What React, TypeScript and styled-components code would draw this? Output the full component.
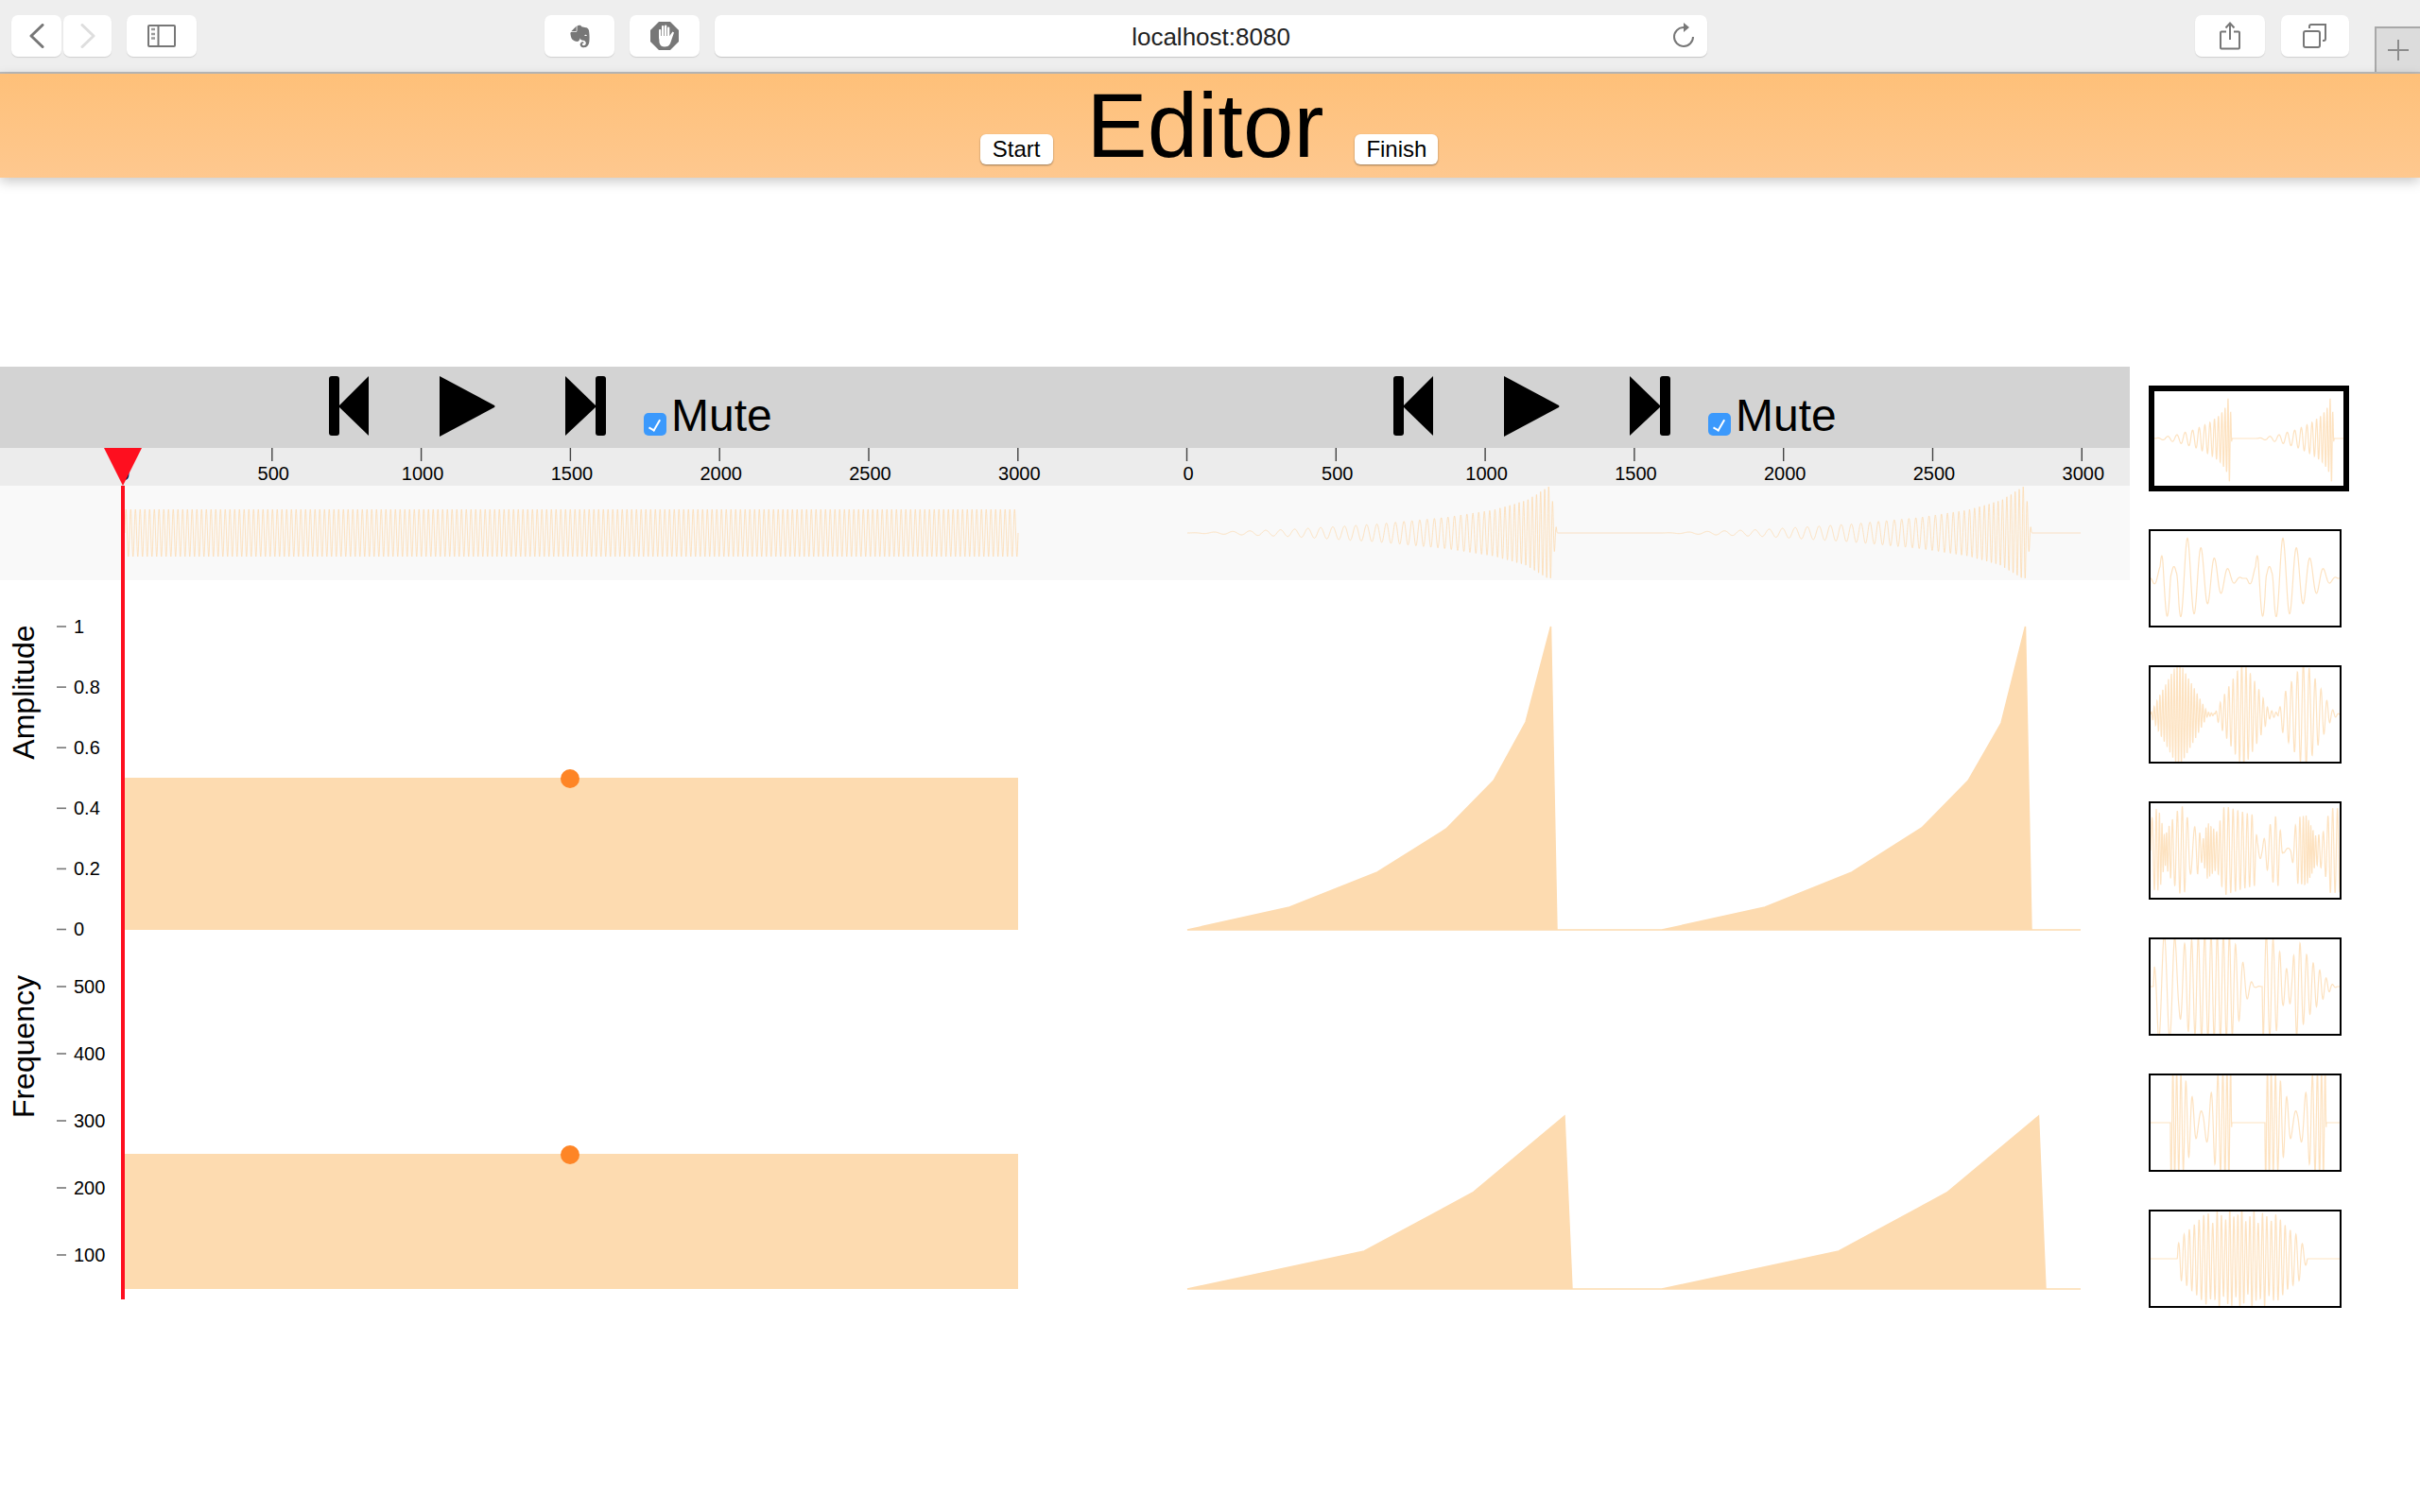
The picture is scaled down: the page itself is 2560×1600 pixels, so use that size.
import React from 'react';
import styled, { createGlobalStyle } from 'styled-components';
import { FaEvernote } from 'react-icons/fa';

const PEACH = '#fddbb0';

type Pts = [number, number][];

const lerp = (pts: Pts, x: number) => {
  if (x <= pts[0][0]) return pts[0][1];
  for (let i = 1; i < pts.length; i++) {
    if (x <= pts[i][0]) {
      const [x0, y0] = pts[i - 1];
      const [x1, y1] = pts[i];
      return y0 + ((y1 - y0) * (x - x0)) / (x1 - x0 || 1);
    }
  }
  return pts[pts.length - 1][1];
};

// walks a sine along x, env and rate points are local to the segment start
const wave = (from: number, to: number, env: Pts, rate: Pts, cy: number, scale: number, phase = 0, step = 0.25) => {
  const out: string[] = [];
  let p = phase;
  for (let x = from; x <= to; x += step) {
    const local = x - from;
    const a = lerp(env, local);
    out.push(`${x.toFixed(2)},${(cy - a * scale * Math.sin(p)).toFixed(2)}`);
    p += 2 * Math.PI * lerp(rate, local) * step;
  }
  return out.join(' ');
};

const mainEnv: Pts = [[0, 0], [108, 0.075], [201, 0.19], [274, 0.333], [324, 0.49], [358, 0.685], [384, 1], [391, 0.03], [392, 0]];
const mainRate: Pts = [[0, 0.041], [187, 0.0875], [302, 0.16], [399, 0.256]];

const leftOverview = wave(132, 1077, [[0, 0.5]], [[0, 0.2]], 564, 50);
const rightOverview = [
  wave(1256, 1758, mainEnv, mainRate, 564, 50),
  wave(1758, 2201, mainEnv, mainRate, 564, 50),
].join(' ');

const ampLine = '1256,984 1364,960 1457,923 1530,877 1580,826 1614,764 1640.5,663 1647,984 1758,984 1867,960 1959,923 2033,876 2082,826 2117,765 2142.5,663 2149,984 2201,984';
const freqLine = '1256,1364 1443,1324 1558,1262 1655,1181 1663,1364 1758,1364 1945,1324 2059.5,1262 2156.5,1181 2164,1364 2201,1364';

const th1Env: Pts = [[0, 0], [23, 0.075], [43, 0.19], [58, 0.33], [69, 0.49], [76, 0.685], [79, 0.95], [80, 0.9], [82, 0.02], [83, 0]];
const th1Rate: Pts = [[0, 0.08], [40, 0.13], [60, 0.2], [80, 0.35]];
const th2Env: Pts = [[0, 0], [3, 0.1], [10, 0.25], [13, 0.8], [20, 0.8], [22, 0.25], [27, 0.25], [30, 0.8], [39, 0.85], [53, 0.65], [68, 0.42], [82, 0.2], [90, 0.08], [97, 0]];
const th6Env: Pts = [[0, 1.2], [14, 1], [24, 0.5], [29, 0.25], [34, 0.25], [41, 0.5], [49, 1], [64, 1.2], [65, 0]];
const th6Rate: Pts = [[0, 0.28], [24, 0.12], [34, 0.08], [44, 0.12], [64, 0.28]];

const thumbs: string[] = [
  [wave(0, 108, th1Env, th1Rate, 50, 50), wave(108, 200, th1Env, th1Rate, 50, 50)].join(' '),
  [wave(0, 101, th2Env, [[0, 0.07]], 50, 50, 3.27), wave(101, 200, th2Env, [[0, 0.07]], 50, 50, 3.27)].join(' '),
  [
    wave(0, 68, [[0, 0.02], [12, 0.5], [30, 1.15], [45, 0.6], [60, 0.05], [68, 0.02]], [[0, 0.33]], 50, 50),
    wave(68, 135, [[0, 0.02], [8, 0.35], [30, 1.15], [45, 0.6], [57, 0.1], [67, 0.03]], [[0, 0.22]], 50, 50),
    wave(135, 200, [[0, 0.03], [5, 0.4], [28, 1.15], [45, 0.55], [56, 0.12], [65, 0]], [[0, 0.16]], 50, 50),
  ].join(' '),
  wave(0, 200,
    [[0, 0.6], [5, 0.9], [10, 0.8], [15, 0.3], [20, 0.55], [30, 0.9], [35, 0.95], [42, 0.5], [50, 0.5], [55, 0.2], [60, 0.6], [70, 0.4], [78, 0.95], [85, 0.9], [100, 0.8], [110, 0.75], [113, 0.2], [118, 0.15], [122, 0.35], [130, 0.7], [135, 0.75], [140, 0.05], [148, 0.05], [155, 0.7], [165, 0.75], [175, 0.3], [183, 0.4], [190, 0.9], [200, 0.9]],
    [[0, 0.15], [15, 0.45], [25, 0.18], [35, 0.2], [45, 0.1], [60, 0.4], [70, 0.3], [80, 0.2], [110, 0.2], [115, 0.12], [135, 0.2], [145, 0.08], [155, 0.2], [170, 0.45], [180, 0.2], [200, 0.2]],
    50, 50),
  wave(0, 200,
    [[0, 0], [3, 0], [4, 0.5], [8, 1.1], [25, 1.1], [30, 0.6], [35, 0.9], [55, 1.1], [85, 1.1], [92, 0.8], [98, 0.5], [104, 0.18], [110, 0.02], [118, 0], [119, 1.2], [135, 0.9], [140, 0.4], [150, 0.35], [153, 1.1], [160, 0.85], [166, 0.65], [172, 0.5], [179, 0.35], [185, 0.2], [192, 0.05], [198, 0], [200, 0]],
    [[0, 0.085], [30, 0.09], [40, 0.14], [85, 0.16], [100, 0.1], [118, 0.14], [150, 0.14], [200, 0.15]],
    50, 50),
  [
    wave(0, 21, [[0, 0]], [[0, 0.1]], 50, 50),
    wave(21, 121, th6Env, th6Rate, 50, 50, 3.4),
    wave(121, 200, th6Env, th6Rate, 50, 50, 3.4),
  ].join(' '),
  wave(0, 200,
    [[0, 0], [28, 0], [29, 0.3], [32, 0.45], [45, 0.7], [60, 1], [66, 0.75], [72, 1.1], [78, 0.75], [84, 1.1], [90, 0.8], [96, 1.15], [102, 0.7], [108, 1.1], [114, 0.75], [120, 1.05], [126, 0.75], [132, 0.95], [145, 0.65], [158, 0.45], [165, 0.1], [166, 0]],
    [[0, 0.12], [50, 0.2], [95, 0.24], [140, 0.2], [165, 0.12]],
    50, 50),
];

const GlobalStyle = createGlobalStyle`
  html, body {
    margin: 0;
    background: #fff;
    overflow: hidden;
    font-family: 'Liberation Sans', Arial, sans-serif;
  }
`;

const Page = styled.div`
  width: 2560px;
  height: 1600px;
  overflow: hidden;
`;

const BrowserBar = styled.div`
  display: flex;
  align-items: flex-start;
  height: 60px;
  padding: 16px 0 0 12px;
  background: #eeeeee;
  border-bottom: 2px solid #bbbbbb;
`;

const BarButton = styled.div<{ $w: number; $mr?: number }>`
  display: flex;
  align-items: center;
  justify-content: center;
  flex: none;
  width: ${(p) => p.$w}px;
  height: 44px;
  margin-right: ${(p) => p.$mr ?? 0}px;
  background: #fff;
  border-radius: 7px;
  box-shadow: 0 1px 1px #cfcfcf;
  color: #777;
`;

const UrlField = styled.div`
  position: relative;
  display: flex;
  align-items: center;
  justify-content: center;
  flex: none;
  box-sizing: border-box;
  width: 1050px;
  height: 44px;
  padding-top: 2px;
  margin-right: 516px;
  background: #fff;
  border-radius: 7px;
  box-shadow: 0 1px 1px #c4c4c4;
  font-size: 26px;
  color: #222;
`;

const Reload = styled.svg`
  position: absolute;
  right: 13px;
  top: 7px;
`;

const NewTab = styled.div`
  display: flex;
  align-items: center;
  justify-content: center;
  flex: none;
  box-sizing: border-box;
  width: 48px;
  height: 48px;
  margin: 12px 0 0 27px;
  background: #dcdcdc;
  border-top: 2px solid #a8a8a8;
  border-left: 2px solid #a8a8a8;
`;

const Header = styled.header`
  position: relative;
  display: flex;
  align-items: baseline;
  justify-content: center;
  box-sizing: border-box;
  height: 110px;
  padding-right: 2px;
  background: linear-gradient(#fec079, #fec88f);
  box-shadow: 0 4px 12px rgba(0, 0, 0, 0.22);
`;

const Title = styled.h1`
  margin: 0 33px 0 36px;
  font-size: 96px;
  font-weight: 400;
  line-height: 110px;
  color: #000;
`;

const HeaderButton = styled.button<{ $w: number }>`
  width: ${(p) => p.$w}px;
  height: 32px;
  padding: 0;
  border: none;
  border-radius: 6px;
  background: #fff;
  box-shadow: 0 1px 2px rgba(0, 0, 0, 0.4);
  font-family: inherit;
  font-size: 24px;
  line-height: 32px;
  color: #000;
`;

const Workspace = styled.main`
  display: flex;
  margin-top: 200px;
`;

const Track = styled.section<{ $w: number }>`
  position: relative;
  flex: none;
  width: ${(p) => p.$w}px;
`;

const ControlBar = styled.div<{ $start: number }>`
  display: flex;
  align-items: flex-start;
  box-sizing: border-box;
  height: 86px;
  padding: 10px 0 0 ${(p) => p.$start}px;
  background: #d3d3d3;
`;

const ControlIcon = styled.svg<{ $mr: number }>`
  display: block;
  flex: none;
  margin-right: ${(p) => p.$mr}px;
`;

const MuteLabel = styled.label`
  display: flex;
  align-items: flex-end;
  gap: 5px;
  margin-top: 14px;
  font-size: 48px;
  line-height: 55px;
  color: #000;
`;

const MuteBox = styled.input`
  appearance: none;
  position: relative;
  flex: none;
  width: 24px;
  height: 24px;
  margin: 0 0 6px;
  background: #3b99fc;
  border-radius: 5px;

  &::after {
    content: '';
    position: absolute;
    left: 8px;
    top: 5px;
    width: 5px;
    height: 12px;
    border-right: 2px solid #fff;
    border-bottom: 2px solid #fff;
    transform: rotate(30deg);
  }
`;

const Ruler = styled.svg`
  display: block;
  width: 100%;
  height: 40px;
  background: #ececec;
`;

const Overview = styled.svg`
  display: block;
  width: 100%;
  height: 100px;
  background: #f9f9f9;
`;

const Charts = styled.svg`
  display: block;
  width: 100%;
  height: 780px;
`;

const AxisText = styled.text`
  font-family: 'Liberation Sans', Arial, sans-serif;
  font-size: 20px;
  fill: #000;
`;

const AxisTitle = styled.text`
  font-family: 'Liberation Sans', Arial, sans-serif;
  font-size: 32px;
  fill: #000;
  text-anchor: middle;
`;

const Playhead = styled.div`
  position: absolute;
  left: 110px;
  top: 86px;
  width: 40px;
  height: 901px;
  pointer-events: none;
`;

const PlayheadCap = styled.div`
  width: 40px;
  height: 40px;
  background: #fe0f1f;
  clip-path: polygon(0 0, 100% 0, 50% 100%);
`;

const PlayheadLine = styled.div`
  width: 4px;
  height: 861px;
  margin-left: 18px;
  background: #fe0f1f;
`;

const Sidebar = styled.aside`
  display: flex;
  flex-direction: column;
  align-items: flex-start;
  gap: 40px;
  padding: 20px 0 0 20px;
`;

const Thumb = styled.svg<{ $active?: boolean }>`
  display: block;
  width: 200px;
  height: 100px;
  border: ${(p) => (p.$active ? 6 : 2)}px solid #000;
  overflow: hidden;
`;

const WaveLine = styled.polyline<{ $w: number }>`
  fill: none;
  stroke: ${PEACH};
  stroke-width: ${(p) => p.$w}px;
  stroke-opacity: 0.8;
`;

const ticks = [0, 500, 1000, 1500, 2000, 2500, 3000];
const amps = ['1', '0.8', '0.6', '0.4', '0.2', '0'];
const freqs = ['500', '400', '300', '200', '100'];

const Controls = ({ start }: { start: number }) => (
  <ControlBar $start={start}>
    <ControlIcon $mr={75} width="42" height="64" viewBox="0 0 42 64">
      <rect x="0" y="0" width="11" height="63" rx="3" />
      <polygon points="10,32 42,0 42,63" />
    </ControlIcon>
    <ControlIcon $mr={74} width="59" height="64" viewBox="0 0 59 64">
      <path d="M0 0 L58 31 Q59 32 58 33 L0 64 Z" />
    </ControlIcon>
    <ControlIcon $mr={40} width="43" height="64" viewBox="0 0 43 64">
      <polygon points="0,0 33,32 0,63" />
      <rect x="32" y="0" width="11" height="63" rx="3" />
    </ControlIcon>
    <MuteLabel>
      <MuteBox type="checkbox" defaultChecked />
      Mute
    </MuteLabel>
  </ControlBar>
);

const RulerBand = ({ origin, width, x0 }: { origin: number; width: number; x0: number }) => (
  <Ruler viewBox={`${origin} 474 ${width} 40`}>
    {ticks.map((t) => {
      const x = x0 + (t / 500) * 157.8;
      return (
        <g key={t}>
          <line x1={x} x2={x} y1={474} y2={488} stroke="#444" strokeWidth="1.4" />
          <AxisText x={x + 1.5} y={508} textAnchor="middle">{t}</AxisText>
        </g>
      );
    })}
  </Ruler>
);

const YAxis = () => (
  <>
    <AxisTitle x={36} y={732.5} transform="rotate(-90 36 732.5)">Amplitude</AxisTitle>
    <AxisTitle x={36} y={1107.5} transform="rotate(-90 36 1107.5)">Frequency</AxisTitle>
    {amps.map((a, i) => {
      const y = 663 + i * 64.1;
      return (
        <g key={a}>
          <line x1={60} x2={70} y1={y} y2={y} stroke="#777" strokeWidth="1.6" />
          <AxisText x={78} y={y + 6.5}>{a}</AxisText>
        </g>
      );
    })}
    {freqs.map((f, i) => {
      const y = 1044 + i * 71;
      return (
        <g key={f}>
          <line x1={60} x2={70} y1={y} y2={y} stroke="#777" strokeWidth="1.6" />
          <AxisText x={78} y={y + 6.5}>{f}</AxisText>
        </g>
      );
    })}
  </>
);

export default function App() {
  return (
    <Page>
      <GlobalStyle />
      <BrowserBar>
        <BarButton $w={53} $mr={2}>
          <svg width="16" height="26" viewBox="0 0 16 26" fill="none" stroke="#777" strokeWidth="3" strokeLinecap="round" strokeLinejoin="round">
            <path d="M14 1.5 L2 13 L14 24.5" />
          </svg>
        </BarButton>
        <BarButton $w={51} $mr={16}>
          <svg width="16" height="26" viewBox="0 0 16 26" fill="none" stroke="#dedede" strokeWidth="3" strokeLinecap="round" strokeLinejoin="round">
            <path d="M2 1.5 L14 13 L2 24.5" />
          </svg>
        </BarButton>
        <BarButton $w={74} $mr={368}>
          <svg width="30" height="24" viewBox="0 0 30 24" fill="none" stroke="#777" strokeWidth="2">
            <rect x="1" y="1" width="28" height="22" rx="1" />
            <path d="M11.5 1 V23" />
            <path d="M4 5 H8 M4 10 H8 M4 14.5 H8" strokeWidth="2.4" stroke="#999" />
          </svg>
        </BarButton>
        <BarButton $w={74} $mr={16}>
          <FaEvernote size={27} />
        </BarButton>
        <BarButton $w={74} $mr={16}>
          <svg width="30" height="30" viewBox="0 0 30 30">
            <polygon points="9,0 21,0 30,9 30,21 21,30 9,30 0,21 0,9" fill="#777" />
            <g fill="#fff">
              <rect x="9" y="8" width="2.3" height="10" rx="1" />
              <rect x="12" y="4" width="2.3" height="12" rx="1" />
              <rect x="15" y="3.5" width="2.3" height="12" rx="1" />
              <rect x="18" y="5.5" width="2.3" height="12" rx="1" />
              <path d="M9 15 H20.3 L23.5 10.5 L25 11.5 L21 23 Q19.5 26.5 15 26.5 Q10.5 26.5 9.5 22 Z" />
            </g>
          </svg>
        </BarButton>
        <UrlField>
          localhost:8080
          <Reload width="24" height="28" viewBox="0 0 24 28" fill="none" stroke="#777" strokeWidth="2">
            <path d="M12 6 A10 10 0 1 0 22 16" />
            <polygon points="12,1 18,6 12,11" fill="#777" stroke="none" />
          </Reload>
        </UrlField>
        <BarButton $w={74} $mr={17}>
          <svg width="22" height="30" viewBox="0 0 22 30" fill="none" stroke="#777" strokeWidth="2">
            <path d="M7 10.5 H2 Q1 10.5 1 11.5 V27.5 Q1 28.5 2 28.5 H20 Q21 28.5 21 27.5 V11.5 Q21 10.5 20 10.5 H15" />
            <path d="M11 2 V19 M6.5 6.5 L11 1.5 L15.5 6.5" />
          </svg>
        </BarButton>
        <BarButton $w={72}>
          <svg width="26" height="26" viewBox="0 0 26 26" fill="none" stroke="#777" strokeWidth="2">
            <rect x="1" y="8" width="17" height="17" rx="2" />
            <path d="M7 5 V3 Q7 1 9 1 H24 V16 Q24 18 22 18 H21" />
          </svg>
        </BarButton>
        <NewTab>
          <svg width="24" height="24" viewBox="0 0 24 24" stroke="#8c8c8c" strokeWidth="2">
            <path d="M12 1 V23 M1 12 H23" />
          </svg>
        </NewTab>
      </BrowserBar>

      <Header>
        <HeaderButton $w={77}>Start</HeaderButton>
        <Title>Editor</Title>
        <HeaderButton $w={88}>Finish</HeaderButton>
      </Header>

      <Workspace>
        <Track $w={1127}>
          <Controls start={348} />
          <RulerBand origin={0} width={1127} x0={130} />
          <Overview viewBox="0 514 1127 100">
            <WaveLine $w={1} points={leftOverview} />
          </Overview>
          <Charts viewBox="0 614 1127 780">
            <YAxis />
            <rect x="130" y="823" width="947" height="161" fill={PEACH} />
            <circle cx="603" cy="824" r="10" fill="#fe8526" />
            <rect x="130" y="1221" width="947" height="143" fill={PEACH} />
            <circle cx="603" cy="1222" r="10" fill="#fe8526" />
          </Charts>
          <Playhead>
            <PlayheadCap />
            <PlayheadLine />
          </Playhead>
        </Track>
        <Track $w={1126}>
          <Controls start={347} />
          <RulerBand origin={1127} width={1126} x0={1255.5} />
          <Overview viewBox="1127 514 1126 100">
            <WaveLine $w={1} points={rightOverview} />
          </Overview>
          <Charts viewBox="1127 614 1126 780">
            <polygon points={ampLine} fill={PEACH} stroke={PEACH} strokeWidth="1.5" />
            <polygon points={freqLine} fill={PEACH} stroke={PEACH} strokeWidth="1.5" />
          </Charts>
        </Track>
        <Sidebar>
          {thumbs.map((points, i) => (
            <Thumb key={i} $active={i === 0} viewBox="0 0 200 100">
              <WaveLine $w={1.2} points={points} />
            </Thumb>
          ))}
        </Sidebar>
      </Workspace>
    </Page>
  );
}
